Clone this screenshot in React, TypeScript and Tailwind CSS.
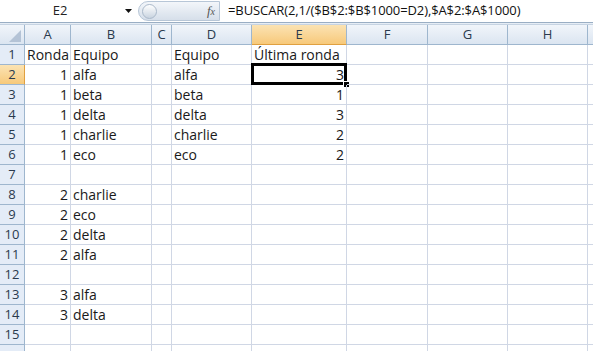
const cols = [
  { name: "A", w: 46 },
  { name: "B", w: 81 },
  { name: "C", w: 20 },
  { name: "D", w: 80 },
  { name: "E", w: 95 },
  { name: "F", w: 81 },
  { name: "G", w: 80 },
  { name: "H", w: 80 },
  { name: "", w: 80 },
];

type Cell = { v: string; right?: boolean };

const data: Record<number, Record<string, Cell>> = {
  1: { A: { v: "Ronda" }, B: { v: "Equipo" }, D: { v: "Equipo" }, E: { v: "Última ronda" } },
  2: { A: { v: "1", right: true }, B: { v: "alfa" }, D: { v: "alfa" }, E: { v: "3", right: true } },
  3: { A: { v: "1", right: true }, B: { v: "beta" }, D: { v: "beta" }, E: { v: "1", right: true } },
  4: { A: { v: "1", right: true }, B: { v: "delta" }, D: { v: "delta" }, E: { v: "3", right: true } },
  5: { A: { v: "1", right: true }, B: { v: "charlie" }, D: { v: "charlie" }, E: { v: "2", right: true } },
  6: { A: { v: "1", right: true }, B: { v: "eco" }, D: { v: "eco" }, E: { v: "2", right: true } },
  8: { A: { v: "2", right: true }, B: { v: "charlie" } },
  9: { A: { v: "2", right: true }, B: { v: "eco" } },
  10: { A: { v: "2", right: true }, B: { v: "delta" } },
  11: { A: { v: "2", right: true }, B: { v: "alfa" } },
  13: { A: { v: "3", right: true }, B: { v: "alfa" } },
  14: { A: { v: "3", right: true }, B: { v: "delta" } },
};

const rows = Array.from({ length: 16 }, (_, i) => i + 1);

export default function App() {
  return (
    <div className="w-[593px] h-[351px] overflow-hidden bg-white font-['Open_Sans',sans-serif] text-[#1a1a1a]">
      {/* formula bar */}
      <div className="h-[23px] flex items-center border-b border-[#9aaec4] bg-white">
        <div className="w-[120px] h-full flex items-center justify-center text-[13px] text-[#222]">E2</div>
        <div className="w-[16px] h-full flex items-center justify-center">
          <svg width="7" height="4" viewBox="0 0 7 4"><path d="M0 0h7L3.5 4z" fill="#111" /></svg>
        </div>
        <div className="ml-[2px] w-[82px] h-[20px] rounded-l-full bg-gradient-to-b from-[#f3f6fa] to-[#d6dfea] border border-[#b7c6d7] flex items-center pl-[3px] relative">
          <div className="w-[15px] h-[15px] rounded-full bg-gradient-to-b from-[#ffffff] to-[#c9d4e0] border border-[#aab9ca]" />
          <span className="absolute right-[4px] top-[0px] font-['Liberation_Serif',serif] italic text-[13px] text-[#555] leading-[18px]">
            f<span className="text-[10px]">x</span>
          </span>
        </div>
        <div className="pl-[8px] text-[13px] tracking-[-0.1px] text-[#111] whitespace-nowrap">
          =BUSCAR(2,1/($B$2:$B$1000=D2),$A$2:$A$1000)
        </div>
      </div>
      <div className="h-[2px] bg-[#e6edf5] border-b border-[#c6d3e2]" />

      {/* column headers */}
      <div className="flex h-[20px] text-[13px] text-[#2a3a4d]">
        <div className="w-[25px] shrink-0 border-r border-b border-[#9eb6ce] bg-gradient-to-b from-[#f1f5fa] to-[#dbe5f1] relative">
          <svg className="absolute right-[3px] bottom-[2px]" width="12" height="12" viewBox="0 0 12 12">
            <path d="M12 0V12H0z" fill="#b4c3d6" />
          </svg>
        </div>
        {cols.map((c) => (
          <div
            key={c.name + c.w}
            style={{ width: c.w }}
            className={`shrink-0 flex items-center justify-center border-r border-b border-[#9eb6ce] ${
              c.name === "E"
                ? "bg-gradient-to-b from-[#fbe3b3] to-[#f7c97a] border-b-[#e0a040]"
                : "bg-gradient-to-b from-[#f1f5fa] to-[#dbe5f1]"
            }`}
          >
            {c.name}
          </div>
        ))}
      </div>

      {/* rows */}
      {rows.map((r) => (
        <div key={r} className="flex h-[20px] text-[14px]">
          <div
            className={`w-[25px] shrink-0 flex items-center justify-center border-r border-b border-[#9eb6ce] text-[13px] text-[#2a3a4d] ${
              r === 2 ? "bg-gradient-to-b from-[#fbe3b3] to-[#f7c97a] border-r-[#e0a040]" : "bg-[#e4ecf7]"
            }`}
          >
            {r < 16 ? r : ""}
          </div>
          {cols.map((c) => {
            const cell = data[r]?.[c.name];
            const sel = r === 2 && c.name === "E";
            return (
              <div
                key={c.name + c.w}
                style={{ width: c.w }}
                className={`shrink-0 relative flex items-center px-[2px] border-r border-b border-[#d0d7e5] whitespace-nowrap overflow-visible ${
                  cell?.right ? "justify-end" : "justify-start"
                }`}
              >
                {cell?.v}
                {sel && (
                  <>
                    <div className="absolute -left-[1px] -top-[2px] -right-[1px] -bottom-[1px] border-[3px] border-black" />
                    <div className="absolute -right-[4px] -bottom-[4px] w-[7px] h-[7px] bg-black border border-white" />
                  </>
                )}
              </div>
            );
          })}
        </div>
      ))}
    </div>
  );
}
